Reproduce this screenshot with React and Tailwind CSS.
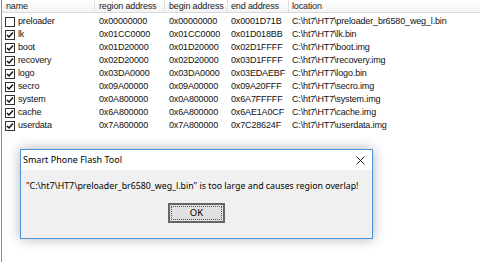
import React from "react";

const rows = [
  { name: "preloader", region: "0x00000000", begin: "0x00000000", end: "0x0001D71B", loc: "C:\\ht7\\HT7\\preloader_br6580_weg_l.bin", checked: false },
  { name: "lk", region: "0x01CC0000", begin: "0x01CC0000", end: "0x01D018BB", loc: "C:\\ht7\\HT7\\lk.bin", checked: true },
  { name: "boot", region: "0x01D20000", begin: "0x01D20000", end: "0x02D1FFFF", loc: "C:\\ht7\\HT7\\boot.img", checked: true },
  { name: "recovery", region: "0x02D20000", begin: "0x02D20000", end: "0x03D1FFFF", loc: "C:\\ht7\\HT7\\recovery.img", checked: true },
  { name: "logo", region: "0x03DA0000", begin: "0x03DA0000", end: "0x03EDAEBF", loc: "C:\\ht7\\HT7\\logo.bin", checked: true },
  { name: "secro", region: "0x09A00000", begin: "0x09A00000", end: "0x09A20FFF", loc: "C:\\ht7\\HT7\\secro.img", checked: true },
  { name: "system", region: "0x0A800000", begin: "0x0A800000", end: "0x6A7FFFFF", loc: "C:\\ht7\\HT7\\system.img", checked: true },
  { name: "cache", region: "0x6A800000", begin: "0x6A800000", end: "0x6AE1A0CF", loc: "C:\\ht7\\HT7\\cache.img", checked: true },
  { name: "userdata", region: "0x7A800000", begin: "0x7A800000", end: "0x7C28624F", loc: "C:\\ht7\\HT7\\userdata.img", checked: true },
];

const cols = "grid grid-cols-[93px_70px_63px_61px_1fr]";

const Check = ({ checked }) => (
  <span className="w-[10px] h-[10px] border border-[#333] bg-white flex items-center justify-center shrink-0">
    {checked && (
      <svg width="8" height="8" viewBox="0 0 8 8">
        <path d="M1 4 L3 6 L7 1.5" fill="none" stroke="#111" strokeWidth="1.5" />
      </svg>
    )}
  </span>
);

const App = () => {
  return (
    <div className="relative w-[480px] h-[262px] bg-white overflow-hidden font-['Liberation_Sans',sans-serif] text-[9px] tracking-[-0.15px] text-[#111]">
      <div className="h-full border-l border-[#8a8a8a] ml-[1px]">
        <div className={`${cols} h-[13px] border-b border-[#d8d8d8] bg-gradient-to-b from-white to-[#f3f3f3] text-[#222]`}>
          <div className="pl-[4px] leading-[12px] border-r border-[#e2e2e2]">name</div>
          <div className="pl-[4px] leading-[12px] border-r border-[#e2e2e2]">region address</div>
          <div className="pl-[4px] leading-[12px] border-r border-[#e2e2e2]">begin address</div>
          <div className="pl-[3px] leading-[12px] border-r border-[#e2e2e2]">end address</div>
          <div className="pl-[3px] leading-[12px]">location</div>
        </div>
        <div className="pt-[2px]">
          {rows.map((r) => (
            <div key={r.name} className={`${cols} h-[13px] items-center`}>
              <div className="flex items-center gap-[3px] pl-[3px]">
                <Check checked={r.checked} />
                <span>{r.name}</span>
              </div>
              <div className="pl-[4px]">{r.region}</div>
              <div className="pl-[4px]">{r.begin}</div>
              <div className="pl-[3px]">{r.end}</div>
              <div className="pl-[3px] whitespace-nowrap">{r.loc}</div>
            </div>
          ))}
        </div>
      </div>

      <div className="absolute left-[20px] top-[149px] w-[353px] h-[90px] border border-[#4a94dc] bg-[#f0f0f0] shadow-[0_0_12px_rgba(0,0,0,0.3)] flex flex-col font-['Noto_Sans',sans-serif] tracking-normal text-black">
        <div className="h-[20px] bg-white flex items-center justify-between pl-[2px] pr-[7px] text-[9px]">
          <span>Smart Phone Flash Tool</span>
          <svg width="9" height="9" viewBox="0 0 9 9">
            <path d="M0.5 0.5 L8.5 8.5 M8.5 0.5 L0.5 8.5" stroke="#222" strokeWidth="1" />
          </svg>
        </div>
        <div className="pl-[5px] pt-[10px] text-[8.8px] leading-[13px] whitespace-nowrap">
          "C:\ht7\HT7\preloader_br6580_weg_l.bin" is too large and causes region overlap!
        </div>
        <div className="flex justify-center pt-[10px]">
          <button className="w-[57px] h-[20px] border-2 border-[#666] bg-[#e1e1e1] p-[1px] text-[9.5px]">
            <span className="flex h-full w-full items-center justify-center border border-dotted border-[#555]">OK</span>
          </button>
        </div>
      </div>
    </div>
  );
};

export default App;
